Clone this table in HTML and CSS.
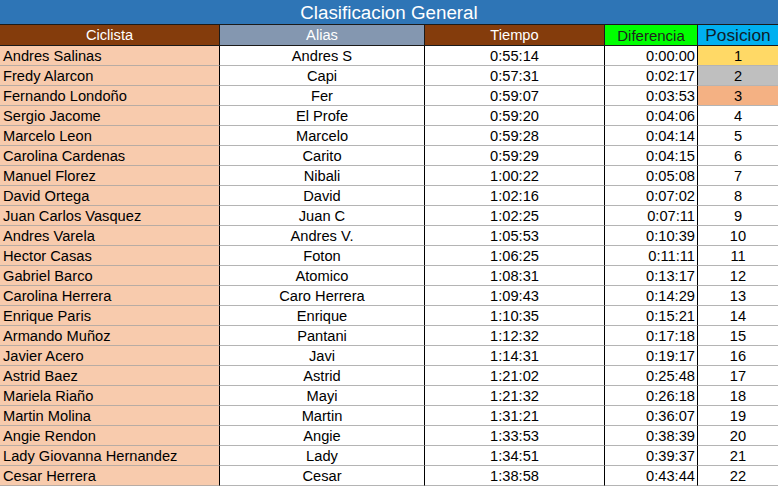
FILE: index.html
```html
<!DOCTYPE html>
<html lang="es">
<head>
<meta charset="utf-8">
<title>Clasificacion General</title>
<link rel="stylesheet" href="styles.css">
</head>
<body>
<div class="sheet">
  <div class="title">Clasificacion General</div>
  <div class="grid">
    <div class="h h-ciclista">Ciclista</div>
    <div class="h h-alias">Alias</div>
    <div class="h h-tiempo">Tiempo</div>
    <div class="h h-dif">Diferencia</div>
    <div class="h h-pos">Posicion</div>

    <div class="c name">Andres Salinas</div><div class="c ctr">Andres S</div><div class="c ctr">0:55:14</div><div class="c dif">0:00:00</div><div class="c pos p1">1</div>
    <div class="c name">Fredy Alarcon</div><div class="c ctr">Capi</div><div class="c ctr">0:57:31</div><div class="c dif">0:02:17</div><div class="c pos p2">2</div>
    <div class="c name">Fernando Londoño</div><div class="c ctr">Fer</div><div class="c ctr">0:59:07</div><div class="c dif">0:03:53</div><div class="c pos p3">3</div>
    <div class="c name">Sergio Jacome</div><div class="c ctr">El Profe</div><div class="c ctr">0:59:20</div><div class="c dif">0:04:06</div><div class="c pos">4</div>
    <div class="c name">Marcelo Leon</div><div class="c ctr">Marcelo</div><div class="c ctr">0:59:28</div><div class="c dif">0:04:14</div><div class="c pos">5</div>
    <div class="c name">Carolina Cardenas</div><div class="c ctr">Carito</div><div class="c ctr">0:59:29</div><div class="c dif">0:04:15</div><div class="c pos">6</div>
    <div class="c name">Manuel Florez</div><div class="c ctr">Nibali</div><div class="c ctr">1:00:22</div><div class="c dif">0:05:08</div><div class="c pos">7</div>
    <div class="c name">David Ortega</div><div class="c ctr">David</div><div class="c ctr">1:02:16</div><div class="c dif">0:07:02</div><div class="c pos">8</div>
    <div class="c name">Juan Carlos Vasquez</div><div class="c ctr">Juan C</div><div class="c ctr">1:02:25</div><div class="c dif">0:07:11</div><div class="c pos">9</div>
    <div class="c name">Andres Varela</div><div class="c ctr">Andres V.</div><div class="c ctr">1:05:53</div><div class="c dif">0:10:39</div><div class="c pos">10</div>
    <div class="c name">Hector Casas</div><div class="c ctr">Foton</div><div class="c ctr">1:06:25</div><div class="c dif">0:11:11</div><div class="c pos">11</div>
    <div class="c name">Gabriel Barco</div><div class="c ctr">Atomico</div><div class="c ctr">1:08:31</div><div class="c dif">0:13:17</div><div class="c pos">12</div>
    <div class="c name">Carolina Herrera</div><div class="c ctr">Caro Herrera</div><div class="c ctr">1:09:43</div><div class="c dif">0:14:29</div><div class="c pos">13</div>
    <div class="c name">Enrique Paris</div><div class="c ctr">Enrique</div><div class="c ctr">1:10:35</div><div class="c dif">0:15:21</div><div class="c pos">14</div>
    <div class="c name">Armando Muñoz</div><div class="c ctr">Pantani</div><div class="c ctr">1:12:32</div><div class="c dif">0:17:18</div><div class="c pos">15</div>
    <div class="c name">Javier Acero</div><div class="c ctr">Javi</div><div class="c ctr">1:14:31</div><div class="c dif">0:19:17</div><div class="c pos">16</div>
    <div class="c name">Astrid Baez</div><div class="c ctr">Astrid</div><div class="c ctr">1:21:02</div><div class="c dif">0:25:48</div><div class="c pos">17</div>
    <div class="c name">Mariela Riaño</div><div class="c ctr">Mayi</div><div class="c ctr">1:21:32</div><div class="c dif">0:26:18</div><div class="c pos">18</div>
    <div class="c name">Martin Molina</div><div class="c ctr">Martin</div><div class="c ctr">1:31:21</div><div class="c dif">0:36:07</div><div class="c pos">19</div>
    <div class="c name">Angie Rendon</div><div class="c ctr">Angie</div><div class="c ctr">1:33:53</div><div class="c dif">0:38:39</div><div class="c pos">20</div>
    <div class="c name">Lady Giovanna Hernandez</div><div class="c ctr">Lady</div><div class="c ctr">1:34:51</div><div class="c dif">0:39:37</div><div class="c pos">21</div>
    <div class="c name">Cesar Herrera</div><div class="c ctr">Cesar</div><div class="c ctr">1:38:58</div><div class="c dif">0:43:44</div><div class="c pos">22</div>
  </div>
</div>
</body>
</html>
```
FILE: styles.css
```css
html, body {
  margin: 0;
  padding: 0;
  background: #ffffff;
}
body {
  font-family: "Liberation Sans", Arial, sans-serif;
  color: #000;
}
.sheet {
  width: 778px;
}
.title {
  box-sizing: border-box;
  height: 24px;
  padding-top: 1px;
  background: #2e75b6;
  color: #ffffff;
  font-size: 18.8px;
  line-height: 23px;
  text-align: center;
}
.grid {
  display: grid;
  grid-template-columns: 220px 205px 180px 93px 80px;
}
.h {
  box-sizing: border-box;
  height: 22px;
  padding-top: 1px;
  border-top: 1px solid #1a1a1a;
  border-bottom: 1px solid #1a1a1a;
  border-right: 1px solid #1a1a1a;
  font-size: 14.67px;
  line-height: 19px;
  text-align: center;
  color: #ffffff;
  white-space: nowrap;
}
.h-ciclista, .h-tiempo { background: #843c0c; }
.h-alias { background: #8497b0; }
.h-dif { background: #00ff00; color: #1f1f1f; font-size: 15px; }
.h-pos { background: #00b0f0; color: #10202a; font-size: 17.3px; border-right: none; }
.c {
  box-sizing: border-box;
  height: 20px;
  padding-top: 1px;
  border-bottom: 1px solid #b4b4b4;
  border-right: 1px solid #000;
  font-size: 14.67px;
  line-height: 18px;
  white-space: nowrap;
  overflow: hidden;
}
.name {
  background: #f8cbad;
  padding-left: 3px;
  border-bottom-color: #b8aca4;
}
.ctr { text-align: center; }
.dif { text-align: right; padding-right: 2px; }
.pos { text-align: center; border-right: none; }
.p1 { background: #ffd966; }
.p2 { background: #bfbfbf; }
.p3 { background: #f4b183; }
```
